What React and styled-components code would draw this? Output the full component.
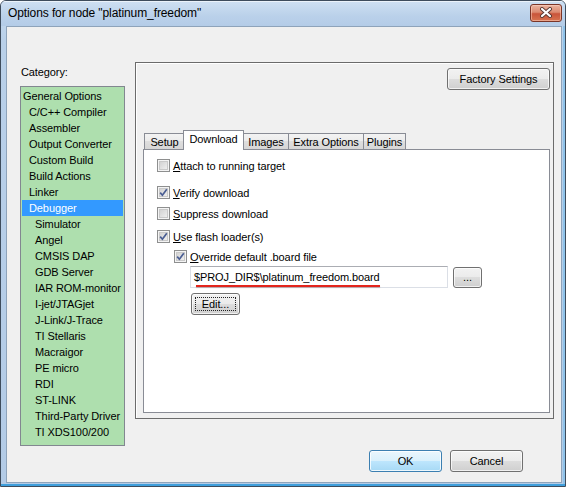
import React from "react";
import styled, { createGlobalStyle, css } from "styled-components";

const GlobalStyle = createGlobalStyle`
  html, body {
    margin: 0;
    padding: 0;
    background: #ffffff;
  }
  body {
    font-family: "Liberation Sans", Arial, sans-serif;
    font-size: 11px;
    letter-spacing: -0.1px;
    color: #000;
  }
  * {
    box-sizing: border-box;
  }
`;

const Window = styled.div`
  width: 566px;
  height: 487px;
  border: 1px solid #3e4c5c;
  border-radius: 6px 6px 0 0;
  background: linear-gradient(#c6daef, #b9d0e9 40px, #b3cbe6);
  box-shadow: inset 0 -2px 0 #3f9fdc, inset -2px 0 0 #8fc3ea;
  display: flex;
  flex-direction: column;
  overflow: hidden;
`;

const TitleBar = styled.div`
  height: 25px;
  flex: none;
  display: flex;
  align-items: center;
  justify-content: space-between;
  padding: 0 3px 0 7px;
  background: linear-gradient(#cfe0f2, #bad1ea 60%, #b4cce7);
  box-shadow: inset 0 1px 0 rgba(255, 255, 255, 0.6);
`;

const Title = styled.span`
  font-size: 12px;
  color: #000;
  margin-top: -2px;
`;

const CloseButton = styled.div`
  width: 32px;
  height: 18px;
  margin-top: -2px;
  border: 1px solid #7a3527;
  border-radius: 3px;
  background: linear-gradient(#eab3a0, #dc8a70 45%, #c9543a 55%, #d77450);
  box-shadow: inset 0 0 0 1px rgba(255, 215, 200, 0.5);
  display: flex;
  align-items: center;
  justify-content: center;
`;

const Body = styled.div`
  flex: 1;
  margin: 0 3px 3px 5px;
  background: #f0f0f0;
  border: 1px solid #8ea3ba;
  padding: 35px 0 0 13px;
  display: flex;
  align-items: flex-start;
`;

const LeftColumn = styled.div`
  width: 105px;
  flex: none;
  display: flex;
  flex-direction: column;
`;

const CategoryLabel = styled.div`
  margin: 4px 0 0 1px;
  line-height: 13px;
`;

const CategoryList = styled.div`
  margin-top: 7px;
  height: 360px;
  border: 1px solid #828790;
  background: #aedfae;
  padding: 1px 1px 0;
`;

const CategoryItem = styled.div`
  height: 16px;
  line-height: 16px;
  white-space: nowrap;
  padding-left: ${(p) => [1, 7, 13][p.$level]}px;
  ${(p) =>
    p.$selected &&
    css`
      background: #3399ff;
      color: #fff;
    `}
`;

const RightColumn = styled.div`
  width: 419px;
  margin-left: 10px;
  display: flex;
  flex-direction: column;
`;

const Panel = styled.div`
  height: 357px;
  border: 1px solid #6b6b6b;
  box-shadow: inset 1px 1px 0 #ffffff;
  padding: 5px 3px 5px 7px;
  display: flex;
  flex-direction: column;
`;

const PanelHeader = styled.div`
  display: flex;
  justify-content: flex-end;
`;

const PushButton = styled.button`
  font-family: "Liberation Sans", Arial, sans-serif;
  font-size: 11px;
  letter-spacing: -0.1px;
  color: #000;
  width: ${(p) => p.$w}px;
  height: ${(p) => p.$h || 22}px;
  padding: 0;
  border: 1px solid #707070;
  border-radius: 3px;
  background: linear-gradient(#f2f2f2, #ebebeb 50%, #dddddd 50%, #cfcfcf);
  box-shadow: inset 0 0 0 1px rgba(255, 255, 255, 0.7);
  display: flex;
  align-items: center;
  justify-content: center;
  position: relative;
  ${(p) =>
    p.$default &&
    css`
      border-color: #3c7fb1;
      background: linear-gradient(#eaf6fd, #d9f0fc 50%, #bee6fd 50%, #a7d9f5);
      box-shadow: inset 0 0 0 1px rgba(255, 255, 255, 0.8);
    `}
`;

const FocusRing = styled.span`
  position: absolute;
  inset: 3px;
  border: 1px dotted #222;
`;

const TabStrip = styled.div`
  margin-top: 40px;
  height: 19px;
  display: flex;
  align-items: flex-end;
  padding-left: 1px;
  position: relative;
  z-index: 1;
`;

const Tab = styled.div`
  width: ${(p) => p.$w}px;
  height: 16px;
  border: 1px solid #898c95;
  border-bottom: none;
  margin-right: -1px;
  background: linear-gradient(#f3f3f3, #ebebeb 50%, #dedede 50%, #d6d6d6);
  display: flex;
  align-items: center;
  justify-content: center;
  padding-top: 1px;
  ${(p) =>
    p.$active &&
    css`
      height: 20px;
      margin: 0 -1px -1px -1px;
      background: #ffffff;
      padding-top: 0;
      padding-bottom: 3px;
      position: relative;
      z-index: 2;
    `}
`;

const TabPage = styled.div`
  flex: 1;
  border: 1px solid #898c95;
  background: #ffffff;
  padding: 9px 0 0 13px;
  display: flex;
  flex-direction: column;
  align-items: flex-start;
`;

const CheckRow = styled.div`
  display: flex;
  align-items: center;
  height: 13px;
  margin-top: ${(p) => p.$top || 0}px;
  margin-left: ${(p) => p.$indent || 0}px;
  white-space: nowrap;
`;

const Box = styled.span`
  width: 13px;
  height: 13px;
  flex: none;
  border: 1px solid #8e8f8f;
  box-shadow: inset 0 0 0 1px #f4f4f4, inset 0 0 0 2px #c9c9c9;
  background-image: linear-gradient(135deg, #cbcbcb, #f6f6f6);
  margin-right: 3px;
  display: flex;
  align-items: center;
  justify-content: center;
`;

const Key = styled.span`
  text-decoration: underline;
`;

const PathRow = styled.div`
  display: flex;
  align-items: center;
  margin: 3px 0 0 33px;
`;

const PathField = styled.div`
  width: 258px;
  height: 22px;
  border: 1px solid #dbdfe6;
  border-top-color: #abadb3;
  background: #fff;
  padding-left: 3px;
  display: flex;
  align-items: center;
`;

const PathText = styled.span`
  position: relative;
  &::after {
    content: "";
    position: absolute;
    left: 2px;
    right: 0;
    bottom: -4px;
    height: 2px;
    background: #e3241c;
    box-shadow: 0 1px 1px rgba(120, 60, 60, 0.35);
  }
`;

const EditRow = styled.div`
  margin: 5px 0 0 34px;
`;

const ButtonRow = styled.div`
  margin-top: 31px;
  padding-right: 31px;
  display: flex;
  justify-content: flex-end;
  gap: 8px;
`;

const categories = [
  ["General Options", 0],
  ["C/C++ Compiler", 1],
  ["Assembler", 1],
  ["Output Converter", 1],
  ["Custom Build", 1],
  ["Build Actions", 1],
  ["Linker", 1],
  ["Debugger", 1, true],
  ["Simulator", 2],
  ["Angel", 2],
  ["CMSIS DAP", 2],
  ["GDB Server", 2],
  ["IAR ROM-monitor", 2],
  ["I-jet/JTAGjet", 2],
  ["J-Link/J-Trace", 2],
  ["TI Stellaris", 2],
  ["Macraigor", 2],
  ["PE micro", 2],
  ["RDI", 2],
  ["ST-LINK", 2],
  ["Third-Party Driver", 2],
  ["TI XDS100/200", 2],
];

const tabs = [
  ["Setup", 41],
  ["Download", 61, true],
  ["Images", 46],
  ["Extra Options", 76],
  ["Plugins", 43],
];

const CloseGlyph = () => (
  <svg width="14" height="11" viewBox="0 0 14 11">
    <path d="M3 2 L11 9 M11 2 L3 9" stroke="#5a3a34" strokeWidth="4" strokeLinecap="round" />
    <path d="M3 2 L11 9 M11 2 L3 9" stroke="#ffffff" strokeWidth="2.2" strokeLinecap="round" />
  </svg>
);

const Check = () => (
  <svg width="9" height="9" viewBox="0 0 9 9">
    <path d="M1.2 4.6 L3.4 7.2 L7.8 1.2" fill="none" stroke="#4a5e93" strokeWidth="1.7" />
  </svg>
);

const Checkbox = ({ checked, top, indent, children }) => (
  <CheckRow $top={top} $indent={indent}>
    <Box>{checked && <Check />}</Box>
    <span>{children}</span>
  </CheckRow>
);

export default function App() {
  return (
    <>
      <GlobalStyle />
      <Window>
        <TitleBar>
          <Title>Options for node "platinum_freedom"</Title>
          <CloseButton>
            <CloseGlyph />
          </CloseButton>
        </TitleBar>
        <Body>
          <LeftColumn>
            <CategoryLabel>Category:</CategoryLabel>
            <CategoryList>
              {categories.map(([name, level, selected]) => (
                <CategoryItem key={name} $level={level} $selected={selected}>
                  {name}
                </CategoryItem>
              ))}
            </CategoryList>
          </LeftColumn>
          <RightColumn>
            <Panel>
              <PanelHeader>
                <PushButton $w={103}>Factory Settings</PushButton>
              </PanelHeader>
              <TabStrip>
                {tabs.map(([label, w, active]) => (
                  <Tab key={label} $w={w} $active={active}>
                    {label}
                  </Tab>
                ))}
              </TabStrip>
              <TabPage>
                <Checkbox>
                  <Key>A</Key>ttach to running target
                </Checkbox>
                <Checkbox checked top={14}>
                  <Key>V</Key>erify download
                </Checkbox>
                <Checkbox top={8}>
                  <Key>S</Key>uppress download
                </Checkbox>
                <Checkbox checked top={10}>
                  <Key>U</Key>se flash loader(s)
                </Checkbox>
                <Checkbox checked top={7} indent={17}>
                  <Key>O</Key>verride default .board file
                </Checkbox>
                <PathRow>
                  <PathField>
                    <PathText>$PROJ_DIR$\platinum_freedom.board</PathText>
                  </PathField>
                  <PushButton $w={29} $h={21} style={{ marginLeft: 5 }}>
                    ...
                  </PushButton>
                </PathRow>
                <EditRow>
                  <PushButton $w={49}>
                    <FocusRing />
                    Edit...
                  </PushButton>
                </EditRow>
              </TabPage>
            </Panel>
            <ButtonRow>
              <PushButton $w={73} $default>
                OK
              </PushButton>
              <PushButton $w={73}>Cancel</PushButton>
            </ButtonRow>
          </RightColumn>
        </Body>
      </Window>
    </>
  );
}
